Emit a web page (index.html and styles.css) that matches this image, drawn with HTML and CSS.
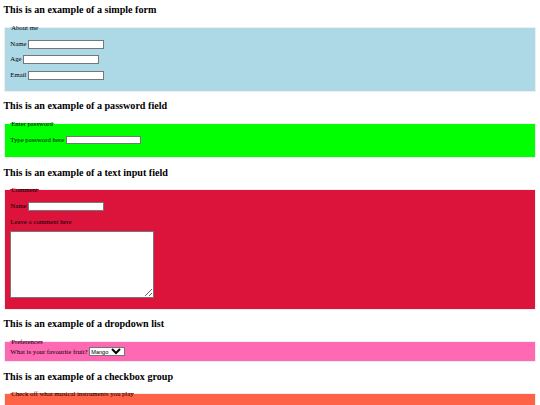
FILE: index.html
```html
<!DOCTYPE html>
<html lang="en">
<head>
    <meta charset="UTF-8">
    <meta name="viewport" content="width=device-width, initial-scale=1.0">
    <title>Form examples</title>
    <link rel="stylesheet" href="styles.css">
</head>
<body>
    <h2 class="example-title first">This is an example of a simple form</h2>
    <form>
        <fieldset class="about-me">
            <legend>About me</legend>
            <p><label for="name">Name</label> <input type="text" id="name" name="name"></p>
            <p><label for="age">Age</label> <input type="number" id="age" name="age"></p>
            <p><label for="email">Email</label> <input type="email" id="email" name="email"></p>
        </fieldset>
    </form>

    <h2 class="example-title">This is an example of a password field</h2>
    <form>
        <fieldset class="password">
            <legend>Enter password</legend>
            <p><label for="pwd">Type password here</label> <input type="password" id="pwd" name="pwd"></p>
        </fieldset>
    </form>

    <h2 class="example-title">This is an example of a text input field</h2>
    <form>
        <fieldset class="comment">
            <legend>Comment</legend>
            <p><label for="cname">Name</label> <input type="text" id="cname" name="cname"></p>
            <p><label for="message">Leave a comment here</label></p>
            <p><textarea id="message" name="message"></textarea></p>
        </fieldset>
    </form>

    <h2 class="example-title">This is an example of a dropdown list</h2>
    <form>
        <fieldset class="preferences">
            <legend>Preferences</legend>
            <label for="fruit">What is your favourite fruit?</label>
            <select id="fruit" name="fruit">
                <option value="apple">Apple</option>
                <option value="banana">Banana</option>
                <option value="mango" selected>Mango</option>
                <option value="orange">Orange</option>
                <option value="pear">Pear</option>
            </select>
        </fieldset>
    </form>

    <h2 class="example-title">This is an example of a checkbox group</h2>
    <form>
        <fieldset class="instruments">
            <legend>Check off what musical instruments you play</legend>
            <p><input type="checkbox" id="guitar" name="instrument" value="guitar"> <label for="guitar">Guitar</label></p>
            <p><input type="checkbox" id="piano" name="instrument" value="piano"> <label for="piano">Piano</label></p>
            <p><input type="checkbox" id="drums" name="instrument" value="drums"> <label for="drums">Drums</label></p>
            <p><input type="checkbox" id="violin" name="instrument" value="violin"> <label for="violin">Violin</label></p>
        </fieldset>
    </form>
</body>
</html>
```

FILE: styles.css
```css
html {
    zoom: 0.421875;
}

body {
    margin: 10px 8px 8px;
    font-family: "Liberation Serif", "Times New Roman", serif;
}

.example-title.first {
    margin-top: 0;
}

input, select {
    font-family: "Liberation Sans", Arial, sans-serif;
}

input[type="text"], input[type="number"], input[type="email"], input[type="password"] {
    width: 170px;
}

select {
    width: 86px;
    height: 22px;
}

textarea {
    box-sizing: border-box;
    width: 340px;
    height: 158px;
    vertical-align: bottom;
    font-family: "Liberation Mono", "Courier New", monospace;
}

/* each fieldset gets its own colour */
.about-me {
    background-color: lightblue;
}

.password {
    background-color: lime;
    padding-bottom: 14px;
}

.comment {
    background-color: crimson;
}

.preferences {
    background-color: hotpink;
    padding-bottom: 12px;
}

.instruments {
    background-color: tomato;
}
```
